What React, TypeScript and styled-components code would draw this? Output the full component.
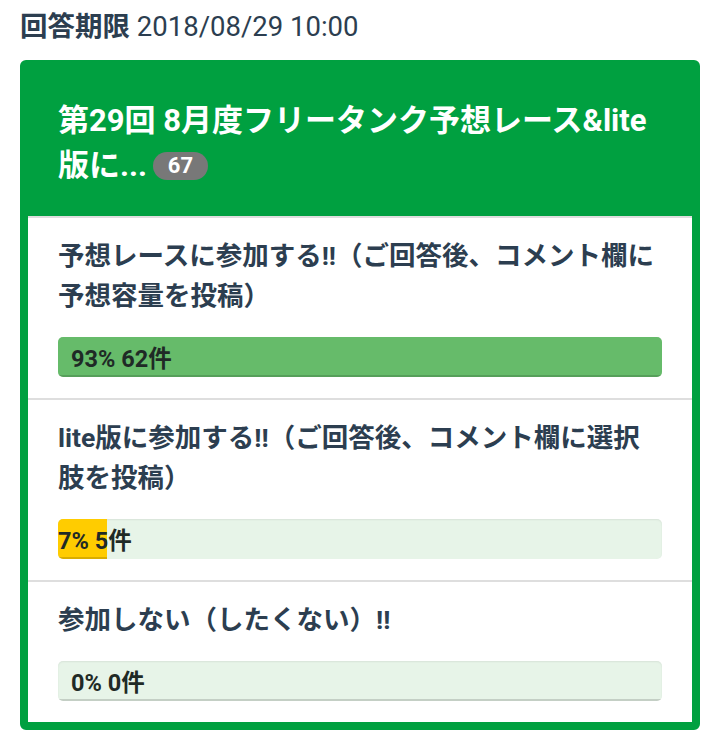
import React from "react";
import styled, { createGlobalStyle } from "styled-components";

const Global = createGlobalStyle`
  html, body { margin: 0; padding: 0; background: #ffffff; }
  body { font-family: Roboto, "Noto Sans CJK JP", "Noto Sans", sans-serif; }
`;

const Page = styled.div`
  padding: 7px 20px 12px 20px;
  width: 720px;
  box-sizing: border-box;
`;

const Deadline = styled.div`
  font-size: 27.5px;
  line-height: 40px;
  color: #2c3e50;
  margin-bottom: 13px;
  white-space: nowrap;
`;

const DeadlineLabel = styled.span`
  font-weight: 700;
`;

const Card = styled.section`
  border: 8px solid #00a040;
  border-radius: 6px;
  background: #ffffff;
  overflow: hidden;
`;

const Header = styled.header`
  background: #00a040;
  padding: 30px 30px 28px 30px;
`;

const Title = styled.h2`
  margin: 0;
  font-size: 31px;
  line-height: 45px;
  font-weight: 700;
  color: #ffffff;
`;

const Badge = styled.span`
  display: inline-flex;
  align-items: center;
  justify-content: center;
  min-width: 55px;
  height: 28px;
  padding: 0 10px;
  box-sizing: border-box;
  margin-left: 6px;
  border-radius: 14px;
  background: #787878;
  color: #ffffff;
  font-size: 22px;
  font-weight: 700;
  vertical-align: 3px;
  line-height: 28px;
`;

const Option = styled.div`
  padding: 18px 30px 21px 30px;
  border-top: 2px solid #dedede;
  &:first-child {
    border-top: none;
    padding-top: 21px;
  }
`;

const OptionText = styled.div`
  font-size: 26.5px;
  line-height: 40px;
  font-weight: 700;
  color: #2c3e50;
  margin-bottom: 21px;
`;

const Track = styled.div`
  position: relative;
  height: 40px;
  border-radius: 5px;
  background: #e7f4e8;
  box-shadow: inset 0 1px 2px rgba(0, 0, 0, 0.07);
  overflow: hidden;
`;

const Fill = styled.div<{ $color: string; $inset: boolean }>`
  height: 100%;
  box-sizing: border-box;
  background: ${(p) => p.$color};
  box-shadow: inset 0 -2px 0 rgba(0, 0, 0, 0.15);
  display: flex;
  align-items: center;
  padding-left: ${(p) => (p.$inset ? "13px" : "0")};
  white-space: nowrap;
  font-size: 23.5px;
  font-weight: 700;
  color: #1f2a26;
`;

type Item = { text: string; count: number; color: string; inset: boolean };

const items: Item[] = [
  {
    text: "予想レースに参加する!!（ご回答後、コメント欄に予想容量を投稿）",
    count: 62,
    color: "#66bb6a",
    inset: true,
  },
  {
    text: "lite版に参加する!!（ご回答後、コメント欄に選択肢を投稿）",
    count: 5,
    color: "#ffcc00",
    inset: false,
  },
  {
    text: "参加しない（したくない）!!",
    count: 0,
    color: "transparent",
    inset: true,
  },
];

export default function App() {
  const total = items.reduce((s, i) => s + i.count, 0);
  const max = Math.max(...items.map((i) => i.count));
  return (
    <>
      <Global />
      <Page>
        <Deadline>
          <DeadlineLabel>回答期限</DeadlineLabel> 2018/08/29 10:00
        </Deadline>
        <Card>
          <Header>
            <Title>
              第29回 8月度フリータンク予想レース&amp;lite版に...
              <Badge>{total}</Badge>
            </Title>
          </Header>
          {items.map((it) => {
            const pct = Math.round((it.count / total) * 100);
            const w = it.count === 0 ? "auto" : `${(it.count / max) * 100}%`;
            return (
              <Option key={it.text}>
                <OptionText>{it.text}</OptionText>
                <Track>
                  <Fill $color={it.color} $inset={it.inset} style={{ width: w }}>
                    {pct}% {it.count}件
                  </Fill>
                </Track>
              </Option>
            );
          })}
        </Card>
      </Page>
    </>
  );
}
